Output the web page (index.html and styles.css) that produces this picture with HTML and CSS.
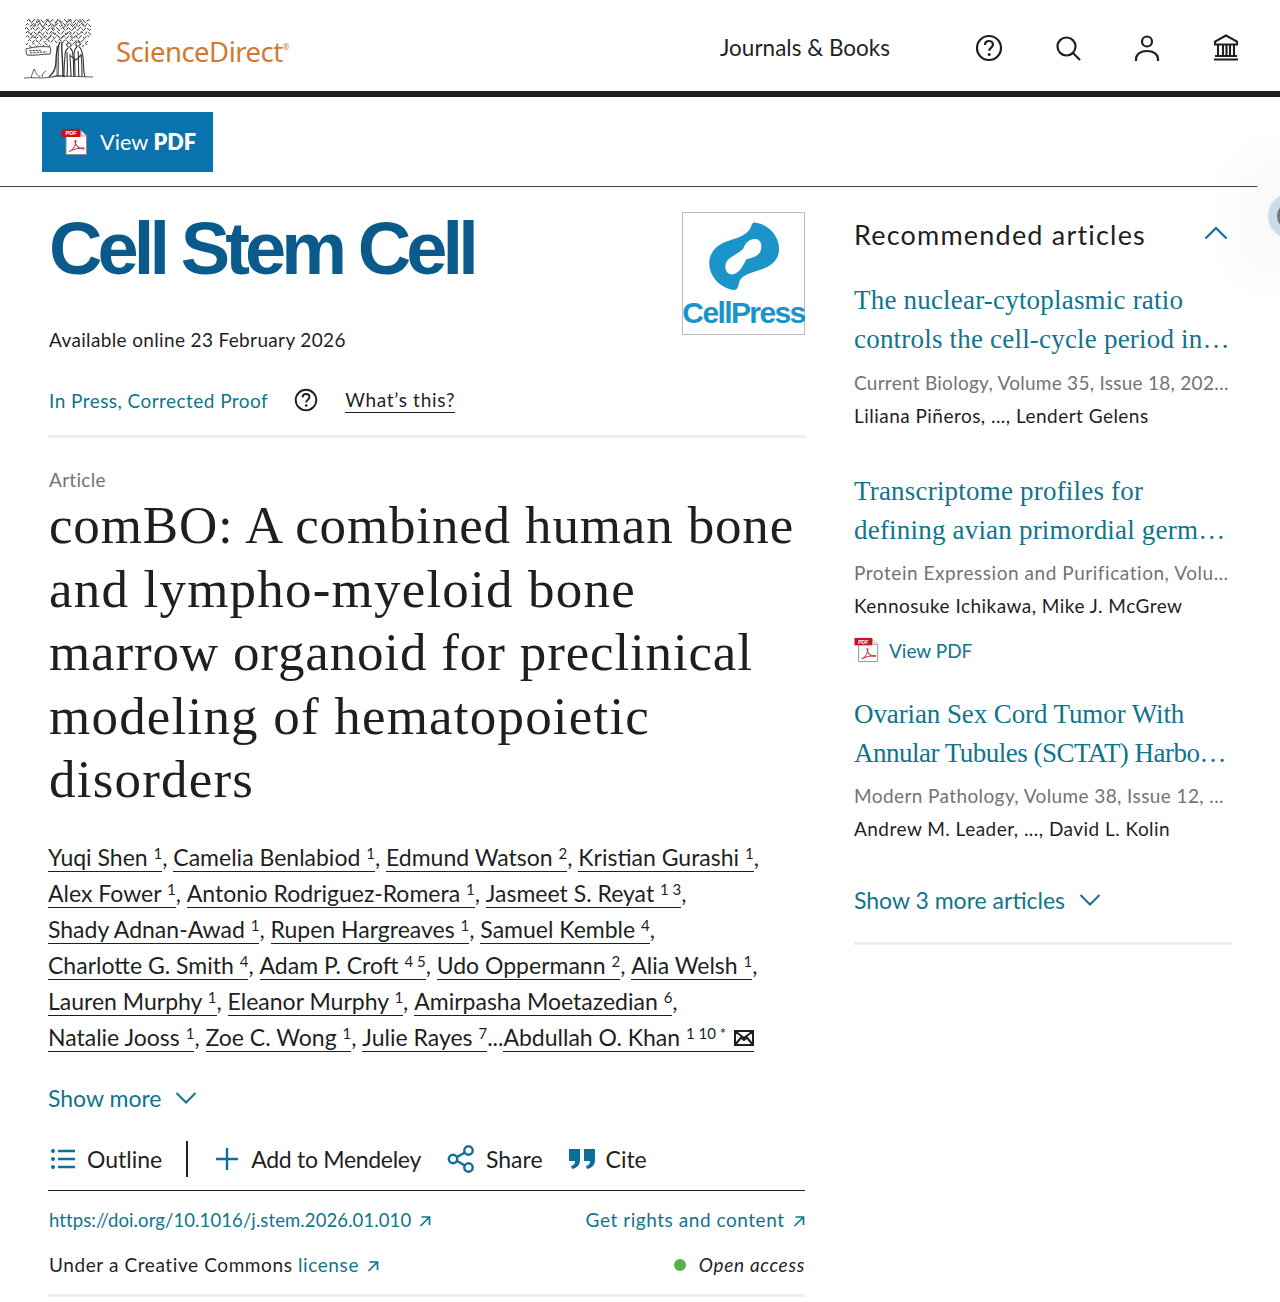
FILE: index.html
```html
<!DOCTYPE html>
<html lang="en">
<head>
<meta charset="utf-8">
<title>comBO - ScienceDirect</title>
<link rel="stylesheet" href="styles.css">
</head>
<body>
<svg class="defs" width="0" height="0" aria-hidden="true">
  <symbol id="ext" viewBox="0 0 12 12">
    <path d="M1.500 11 10 2.500M2.500 2H10.500V10" fill="none" stroke="currentColor" stroke-width="1.700"/>
  </symbol>
  <symbol id="help" viewBox="0 0 28 28">
    <circle cx="14" cy="14" r="12" fill="none" stroke="currentColor" stroke-width="2.200"/>
    <path d="M10 11c0-2.500 1.800-4 4-4s4 1.500 4 3.600c0 3-3.800 3-3.800 6.200" fill="none" stroke="currentColor" stroke-width="2.200"/>
    <circle cx="14.200" cy="20.400" r="1.500" fill="currentColor"/>
  </symbol>
</svg>

<header class="topbar">
  <svg class="tree" viewBox="0 0 70 62" aria-hidden="true">
    <g fill="none" stroke="#3a3a3a" stroke-width="1">
      <path stroke-dasharray="5 1.500" d="M3 3q1.500-3 3 0t3 0 3 0 3 0 3 0 3 0 3 0 3 0 3 0 3 0 3 0 3 0 3 0 3 0 3 0 3 0 3 0 3 0 3 0 3 0 3 0"/>
      <path stroke-dasharray="4 1.200" d="M2 7q1.500-3 3 0t3 0 3 0 3 0 3 0 3 0 3 0 3 0 3 0 3 0 3 0 3 0 3 0 3 0 3 0 3 0 3 0 3 0 3 0 3 0 3 0 3 0"/>
      <path stroke-dasharray="6 1.300" d="M1 11q1.500-3 3 0t3 0 3 0 3 0 3 0 3 0 3 0 3 0 3 0 3 0 3 0 3 0 3 0 3 0 3 0 3 0 3 0 3 0 3 0 3 0 3 0 3 0"/>
      <path stroke-dasharray="4 1.500" d="M2 15q1.500-3 3 0t3 0 3 0 3 0 3 0 3 0 3 0 3 0 3 0 3 0 3 0 3 0 3 0 3 0 3 0 3 0 3 0 3 0 3 0 3 0 3 0 3 0"/>
      <path stroke-dasharray="5 1.200" d="M2 19q1.500-3 3 0t3 0 3 0 3 0 3 0 3 0 3 0 3 0 3 0 3 0 3 0 3 0 3 0 3 0 3 0 3 0 3 0 3 0 3 0 3 0 3 0"/>
      <path stroke-dasharray="4 1.400" d="M4 23q1.500-3 3 0t3 0 3 0 3 0 3 0 3 0 3 0 3 0 3 0 3 0 3 0 3 0 3 0 3 0 3 0 3 0 3 0 3 0 3 0 3 0"/>
      <path stroke-dasharray="3 1.500" d="M2 27q1.500-3 3 0t3 0 3 0 3 0 3 0 3 0 3 0 3 0M42 27q1.500-3 3 0t3 0 3 0 3 0 3 0 3 0 3 0"/>
    </g>
    <g fill="none" stroke="#444" stroke-width=".7">
      <path d="M5 1l5 8 4-8 5 9 5-9 5 10 5-10 6 9 5-9 6 9 5-9 5 8M4 13l6 7 6-6 7 8 6-8 8 7 7-7 6 6 8-6"/>
      <path d="M2 31c6-2 15-3 24-2 1 2 1 5 0 7-8 0-16 2-23 1-1-2-1-4-1-6z" fill="#fff" stroke-width="1"/>
      <path stroke-dasharray="2.500 .8" stroke-width="1" d="M5 33c5-1 8 0 12-.8M6 35c4 0 8-1 17-1"/>
    </g>
    <g fill="none" stroke="#333">
      <path stroke-width="1.400" d="M36 24c-3 6-4 14-4 19 0 6-2 12-7 16M38 24c-1 8 1 17 1 35"/>
      <path stroke-width=".8" d="M33 28v30M35 28c-1 8 0 20-1 30M28 59c4-2 9-2 13 0"/>
      <circle cx="45" cy="27" r="2.200" fill="#fff" stroke-width="1"/>
      <circle cx="54" cy="26" r="2.200" fill="#fff" stroke-width="1"/>
      <path stroke-width="1.100" d="M44 30c-3 3-3 5-3 9-1 7-1 15-1 20M46 30c3 2 3 5 3 8 1 7 0 15 1 21M43 34c0 8 1 17 0 25M46 36c0 8 1 15 1 23"/>
      <path stroke-width="1.100" d="M53 29c-3 2-3 5-3 8 1 8 1 15 1 22M55 29c3 1 3 6 4 10 1 7 0 14 2 20M54 33c1 8 0 17 1 26M57 36c1 7 1 15 1 23M47 38l5 4 5-5"/>
      <path stroke-width=".8" d="M0 60c9-1 17 1 28-1s30 0 41 0M7 60c1-4 2-6 3-9 2 3 2 6 6 8M18 59c0-3 2-5 4-6"/>
    </g>
  </svg>
  <span class="wordmark">ScienceDirect<sup class="reg">®</sup></span>
  <nav class="topnav">
    <span class="journals">Journals &amp; Books</span>
    <svg class="nav-icon" viewBox="0 0 28 28" aria-hidden="true"><use href="#help"/></svg>
    <svg class="nav-icon" viewBox="0 0 28 28" aria-hidden="true"><circle cx="12.500" cy="12.500" r="9" fill="none" stroke="currentColor" stroke-width="2.200"/><path d="M19 19l7 7" stroke="currentColor" stroke-width="2.200" fill="none"/></svg>
    <svg class="nav-icon" viewBox="0 0 28 28" aria-hidden="true"><circle cx="14" cy="7.500" r="5" fill="none" stroke="currentColor" stroke-width="2.200"/><path d="M3 27v-2c0-5 5-8 11-8s11 3 11 8v2" fill="none" stroke="currentColor" stroke-width="2.200"/></svg>
    <svg class="nav-icon" viewBox="0 0 28 28" aria-hidden="true"><path d="M14 1.500 3 7.500v3h22v-3zM2 25.500h24M3 22h22M6 11v11M11 11v11M14.500 11v11M18 11v11M22 11v11" fill="none" stroke="currentColor" stroke-width="2.100"/></svg>
  </nav>
</header>

<div class="pdfbar">
  <a class="pdfbtn">
    <svg class="pdf-icon" viewBox="0 0 28 28" aria-hidden="true">
      <path d="M5 2.500h15l5.500 5.500v18.500H5z" fill="#fff" stroke="#8d8d8d"/>
      <path d="M20 2.500v5.500h5.500" fill="#e8e8e8" stroke="#8d8d8d" stroke-width=".7"/>
      <rect x="0.500" y="1" width="19" height="8" fill="#c8141c"/>
      <text x="10" y="7.200" text-anchor="middle" font-size="5.500" font-weight="700" font-family="Liberation Sans" fill="#fff">PDF</text>
      <path d="M8 23.500c3-1 6-5 7-9.500.3-1.500-.8-2.500-1-.8-.3 2.500 3 7.500 8 7.800 2 .1 1.500-1.300-.5-1.200-4 .2-9 1.500-13.500 3.700z" fill="none" stroke="#c0474d" stroke-width="1.100"/>
    </svg>
    <span>View <b>PDF</b></span>
  </a>
</div>

<aside class="floater" aria-hidden="true"><span class="floater-dot"></span></aside>

<main class="page">
  <article class="main-col">
    <div class="journal-head">
      <div class="journal-info">
        <h2 class="journal-name">Cell Stem Cell</h2>
        <p class="available">Available online 23 February 2026</p>
        <div class="press-row">
          <a class="link">In Press, Corrected Proof</a>
          <svg class="q-icon" aria-hidden="true"><use href="#help"/></svg>
          <a class="whats">What’s this?</a>
        </div>
      </div>
      <div class="cp-logo">
        <svg class="cp-mark" viewBox="80 30 225 215" aria-hidden="true">
          <path fill="#1a94c9" fill-rule="evenodd" d="M225 33C270 38 302 75 302 115C302 150 277 170 245 180C215 190 195 195 182 210C172 225 178 244 160 244C115 235 84 200 84 160C84 125 110 100 145 90C175 80 195 75 210 55C218 45 215 33 225 33ZM190 115C198 92 215 82 232 85C248 88 250 110 243 125C235 140 215 143 200 148C188 172 175 195 155 195C138 195 130 175 136 160C144 140 170 135 190 115Z"/>
        </svg>
        <span class="cp-name">CellPress</span>
      </div>
    </div>
    <hr class="rule">
    <p class="kind">Article</p>
    <h1 class="title">comBO: A combined human bone<br><span class="t-wide">and lympho-myeloid bone</span><br>marrow organoid for preclinical<br><span class="t-wide">modeling of hematopoietic</span><br><span class="t-wide">disorders</span></h1>
    <div class="authors">
      <div class="a-line"><a class="au">Yuqi Shen <sup>1</sup></a>, <a class="au">Camelia Benlabiod <sup>1</sup></a>, <a class="au">Edmund Watson <sup>2</sup></a>, <a class="au">Kristian Gurashi <sup>1</sup></a>,</div>
      <div class="a-line"><a class="au">Alex Fower <sup>1</sup></a>, <a class="au">Antonio Rodriguez-Romera <sup>1</sup></a>, <a class="au">Jasmeet S. Reyat <sup>1 3</sup></a>,</div>
      <div class="a-line"><a class="au">Shady Adnan-Awad <sup>1</sup></a>, <a class="au">Rupen Hargreaves <sup>1</sup></a>, <a class="au">Samuel Kemble <sup>4</sup></a>,</div>
      <div class="a-line"><a class="au">Charlotte G. Smith <sup>4</sup></a>, <a class="au">Adam P. Croft <sup>4 5</sup></a>, <a class="au">Udo Oppermann <sup>2</sup></a>, <a class="au">Alia Welsh <sup>1</sup></a>,</div>
      <div class="a-line"><a class="au">Lauren Murphy <sup>1</sup></a>, <a class="au">Eleanor Murphy <sup>1</sup></a>, <a class="au">Amirpasha Moetazedian <sup>6</sup></a>,</div>
      <div class="a-line"><a class="au">Natalie Jooss <sup>1</sup></a>, <a class="au">Zoe C. Wong <sup>1</sup></a>, <a class="au">Julie Rayes <sup>7</sup></a>...<a class="au">Abdullah O. Khan <sup>1 10 *</sup> <svg class="mail" viewBox="0 0 20 16" aria-hidden="true"><path d="M1 1h18v14H1zM1 1l9 7 9-7M1 15l6.500-8M19 15l-6.500-8M7.500 8l2.500 2 2.500-2" fill="none" stroke="currentColor" stroke-width="2"/></svg></a></div>
    </div>
    <a class="show-more link">Show more <svg class="chev" viewBox="0 0 22 14" aria-hidden="true"><path d="M1.500 2 11 11.500 20.500 2" fill="none" stroke="currentColor" stroke-width="2"/></svg></a>
    <div class="actions">
      <span class="action outline">
        <svg class="a-icon" viewBox="0 0 26 22" aria-hidden="true"><path d="M8 3h17M8 11h17M8 19h17" stroke="#0c6f99" stroke-width="2.400" fill="none"/><circle cx="3" cy="3" r="2" fill="#0c6f99"/><circle cx="3" cy="11" r="2" fill="#0c6f99"/><circle cx="3" cy="19" r="2" fill="#0c6f99"/></svg>
        Outline
      </span>
      <span class="vsep"></span>
      <span class="action add">
        <svg class="a-icon plus" viewBox="0 0 22 22" aria-hidden="true"><path d="M11 0v22M0 11h22" stroke="#0c6f99" stroke-width="2.400" fill="none"/></svg>
        Add to Mendeley
      </span>
      <span class="action share">
        <svg class="a-icon share-icon" viewBox="0 0 28 28" aria-hidden="true"><g fill="none" stroke="#0c6f99" stroke-width="2.400"><circle cx="6" cy="14" r="4.200"/><circle cx="21.500" cy="5.500" r="4.200"/><circle cx="21.500" cy="22.500" r="4.200"/><path d="M10 12l8-4.500M10 16l8 4.500"/></g></svg>
        Share
      </span>
      <span class="action cite">
        <svg class="a-icon cite-icon" viewBox="0 0 26 20" aria-hidden="true"><path fill="#0c6f99" d="M0 0h11v11c0 5-3 8-8 9l-1-3c3-1 4-2 4-5H0zM15 0h11v11c0 5-3 8-8 9l-1-3c3-1 4-2 4-5h-6z"/></svg>
        Cite
      </span>
    </div>
    <div class="meta-row doi-row">
      <a class="link doi">https://doi.org/10.1016/j.stem.2026.01.010 <svg class="ext" aria-hidden="true"><use href="#ext"/></svg></a>
      <a class="link rights">Get rights and content <svg class="ext" aria-hidden="true"><use href="#ext"/></svg></a>
    </div>
    <div class="meta-row cc-row">
      <span>Under a Creative Commons <a class="link">license <svg class="ext" aria-hidden="true"><use href="#ext"/></svg></a></span>
      <span class="oa"><i class="oa-dot"></i><em>Open access</em></span>
    </div>
    <hr class="rule end-rule">
  </article>

  <aside class="side">
    <div class="side-head">
      <h2>Recommended articles</h2>
      <svg class="chev-up" viewBox="0 0 24 14" aria-hidden="true"><path d="M1.500 12.500 12 2l10.500 10.500" fill="none" stroke="#0c6f99" stroke-width="2.200"/></svg>
    </div>
    <section class="rec">
      <h3>The nuclear-cytoplasmic ratio<br>controls the cell-cycle period in…</h3>
      <p class="src">Current Biology, Volume 35, Issue 18, 202…</p>
      <p class="who">Liliana Piñeros, ..., Lendert Gelens</p>
    </section>
    <section class="rec rec-second">
      <h3>Transcriptome profiles for<br>defining avian primordial germ…</h3>
      <p class="src src-wide">Protein Expression and Purification, Volu…</p>
      <p class="who">Kennosuke Ichikawa, Mike J. McGrew</p>
      <a class="rec-pdf link">
        <svg class="pdf-small" viewBox="0 0 28 28" aria-hidden="true">
          <path d="M5 2.500h15l5.500 5.500v18.500H5z" fill="#fff" stroke="#8d8d8d"/>
          <path d="M20 2.500v5.500h5.500" fill="#e8e8e8" stroke="#8d8d8d" stroke-width=".7"/>
          <rect x="0.500" y="1" width="19" height="8" fill="#c8141c"/>
          <text x="10" y="7.200" text-anchor="middle" font-size="5.500" font-weight="700" font-family="Liberation Sans" fill="#fff">PDF</text>
          <path d="M8 23.500c3-1 6-5 7-9.500.3-1.500-.8-2.500-1-.8-.3 2.500 3 7.500 8 7.800 2 .1 1.500-1.300-.5-1.200-4 .2-9 1.500-13.500 3.700z" fill="none" stroke="#c0474d" stroke-width="1.100"/>
        </svg>
        View PDF
      </a>
    </section>
    <section class="rec rec-third">
      <h3>Ovarian Sex Cord Tumor With<br><span class="squeeze">Annular Tubules (SCTAT) Harbo…</span></h3>
      <p class="src src-mid">Modern Pathology, Volume 38, Issue 12, ...</p>
      <p class="who">Andrew M. Leader, ..., David L. Kolin</p>
    </section>
    <a class="show3 link">Show 3 more articles <svg class="chev" viewBox="0 0 22 14" aria-hidden="true"><path d="M1.500 2 11 11.500 20.500 2" fill="none" stroke="currentColor" stroke-width="2"/></svg></a>
    <hr class="rule side-rule">
  </aside>
</main>
</body>
</html>
```
FILE: styles.css
```css
* { box-sizing: border-box; }
html, body { margin: 0; padding: 0; }
body {
  width: 1280px;
  height: 1302px;
  overflow: hidden;
  position: relative;
  background: #fff;
  color: #1f1f1f;
  font-family: "Lato", "Noto Sans", sans-serif;
  font-size: 20px;
}
.defs { position: absolute; }
p, h1, h2, h3 { margin: 0; font-weight: 400; }
sup { font-size: 15px; line-height: 0; vertical-align: 7px; }

.topbar {
  height: 97px;
  border-bottom: 6px solid #1f1f1f;
  display: flex;
  align-items: flex-start;
  padding-left: 24px;
}
.tree { width: 70px; height: 62px; margin-top: 18px; }
.wordmark {
  margin: 33px 0 0 22px;
  color: #cf7a30;
  font-family: "Noto Sans", sans-serif;
  font-size: 27.500px;
  letter-spacing: -.5px;
  line-height: 38px;
}
.reg { font-size: 8px; vertical-align: 12px; }
.topnav {
  margin-left: auto;
  margin-right: 40px;
  margin-top: 32px;
  display: flex;
  align-items: center;
}
.journals { font-size: 22.500px; line-height: 32px; margin-right: 85px; }
.nav-icon { width: 28px; height: 28px; margin-left: 51px; color: #1f1f1f; }
.journals + .nav-icon { margin-left: 0; }

.pdfbar {
  height: 90px;
  border-bottom: 1px solid #444;
  padding: 15px 0 0 42px;
}
.pdfbtn {
  display: inline-flex;
  align-items: center;
  width: 171px;
  height: 60px;
  padding-left: 19px;
  background: #0a72ac;
  color: #fff;
  font-size: 21.700px;
}
.pdfbtn b { font-weight: 800; }
.pdf-icon { width: 28px; height: 28px; margin-right: 11px; }

.floater {
  position: absolute;
  left: 1257px;
  top: 177px;
  width: 40px;
  height: 80px;
  background: #fafafa;
  border-radius: 12px;
  box-shadow: 0 0 50px 20px rgba(0,0,0,.03);
}
.floater-dot {
  position: absolute;
  left: 11px;
  top: 16px;
  width: 46px;
  height: 46px;
  border-radius: 50%;
  background: #6f7680;
  border: 9px solid #cddbe8;
}

.page { display: flex; padding-left: 48px; position: relative; }
.main-col { width: 757px; }
.side { width: 378px; margin-left: 49px; padding-top: 29px; }

.journal-head { display: flex; justify-content: space-between; padding-top: 25px; }
.journal-name {
  margin-top: -1px;
  padding-left: 1px;
  font-family: "Liberation Sans", sans-serif;
  font-weight: 700;
  font-size: 74px;
  line-height: 76px;
  letter-spacing: -4.900px;
  color: #0a5a8c;
}
.available { margin-top: 40px; padding-left: 1px; line-height: 26px; font-size: 19px; letter-spacing: .35px; }
.press-row { display: flex; align-items: center; margin-top: 34px; padding-left: 1px; height: 26px; font-size: 19px; letter-spacing: .45px; }
.link { color: #0f748c; }
.q-icon { width: 24px; height: 24px; margin: 0 27px 0 26px; color: #1f1f1f; }
.whats { border-bottom: 1.500px solid #1f1f1f; line-height: 25px; letter-spacing: .7px; }
.cp-logo {
  width: 123px;
  height: 123px;
  border: 1px solid #bbb;
  display: flex;
  flex-direction: column;
  align-items: center;
  padding-top: 8px;
  color: #1a94c9;
}
.cp-mark { width: 72px; height: 70px; }
.cp-name {
  font-family: "Liberation Sans", sans-serif;
  font-weight: 700;
  font-size: 30px;
  line-height: 34px;
  letter-spacing: -1.600px;
  margin-top: 5px;
  white-space: nowrap;
}

.rule { margin: 0; border: 0; height: 3px; background: #eee; }
.journal-head + .rule { margin-top: 22px; }
.kind { margin-top: 29px; padding-left: 1px; color: #737373; font-size: 19px; line-height: 26px; letter-spacing: .3px; }
.title {
  margin-top: 1px;
  padding-left: 1px;
  font-family: "Liberation Serif", serif;
  font-size: 53px;
  line-height: 63.500px;
  letter-spacing: .85px;
  color: #1f1f1f;
  white-space: nowrap;
}
.t-wide { letter-spacing: 1.200px; }
.authors { margin-top: 27px; font-size: 23px; }
.a-line { height: 36px; line-height: 36px; white-space: nowrap; }
.au { display: inline-block; line-height: 27px; border-bottom: 1.500px solid #1f1f1f; }
.mail { width: 20px; height: 16px; margin-left: 2px; }
.show-more { display: flex; align-items: center; gap: 14px; margin-top: 27px; height: 32px; font-size: 23px; }
.chev { width: 22px; height: 14px; }
.actions {
  display: flex;
  align-items: center;
  margin-top: 15px;
  height: 62px;
  border-bottom: 1.500px solid #1f1f1f;
  font-size: 23px;
}
.action { display: flex; align-items: center; }
.a-icon { width: 26px; height: 22px; }
.outline { padding-left: 2px; gap: 11px; }
.vsep { width: 2px; height: 36px; background: #1f1f1f; margin: 0 28px 0 24px; }
.add { gap: 13px; letter-spacing: -.3px; }
.plus { width: 22px; height: 22px; }
.share { gap: 11px; margin-left: 26px; }
.share-icon { width: 28px; height: 28px; }
.cite { gap: 11px; margin-left: 26px; }
.meta-row { display: flex; justify-content: space-between; align-items: center; font-size: 19px; letter-spacing: .6px; line-height: 26px; }
.doi-row { margin-top: 16px; }
.doi { font-size: 18.500px; letter-spacing: .1px; padding-left: 1px; }
.rights { letter-spacing: .55px; }
.cc-row { margin-top: 19px; padding-left: 1px; }
.ext { width: 12px; height: 12px; margin-left: 3px; }
.oa { display: flex; align-items: center; gap: 13px; letter-spacing: .7px; }
.oa-dot { width: 12px; height: 12px; border-radius: 50%; background: #55b34a; }
.end-rule { margin-top: 16px; }

.side-head { display: flex; justify-content: space-between; align-items: center; height: 36px; padding-right: 4px; }
.side-head h2 { font-size: 27px; letter-spacing: 1.200px; }
.chev-up { width: 24px; height: 14px; margin-top: -3px; }
.rec { margin-top: 29px; }
.rec h3 {
  font-family: "Liberation Serif", serif;
  font-size: 27px;
  line-height: 39px;
  letter-spacing: .2px;
  color: #0f748c;
  white-space: nowrap;
}
.src { margin-top: 10.500px; font-size: 19px; line-height: 26px; color: #737373; letter-spacing: .27px; white-space: nowrap; }
.src-wide { letter-spacing: .55px; }
.src-mid { letter-spacing: .4px; }
.who { margin-top: 7px; font-size: 19px; line-height: 26px; letter-spacing: .47px; white-space: nowrap; }
.rec-second.rec { margin-top: 43px; }
.rec-third.rec { margin-top: 31px; }
.rec-third h3 { letter-spacing: -.1px; }
.rec-third .src { margin-top: 9.500px; }
.squeeze { letter-spacing: -.5px; }
.rec-pdf { display: flex; align-items: center; gap: 9px; margin-top: 17px; height: 28px; font-size: 19px; }
.pdf-small { width: 26px; height: 28px; }
.show3 { display: flex; align-items: center; gap: 14px; margin-top: 42px; height: 32px; font-size: 23px; }
.side-rule { margin-top: 26px; }
```
